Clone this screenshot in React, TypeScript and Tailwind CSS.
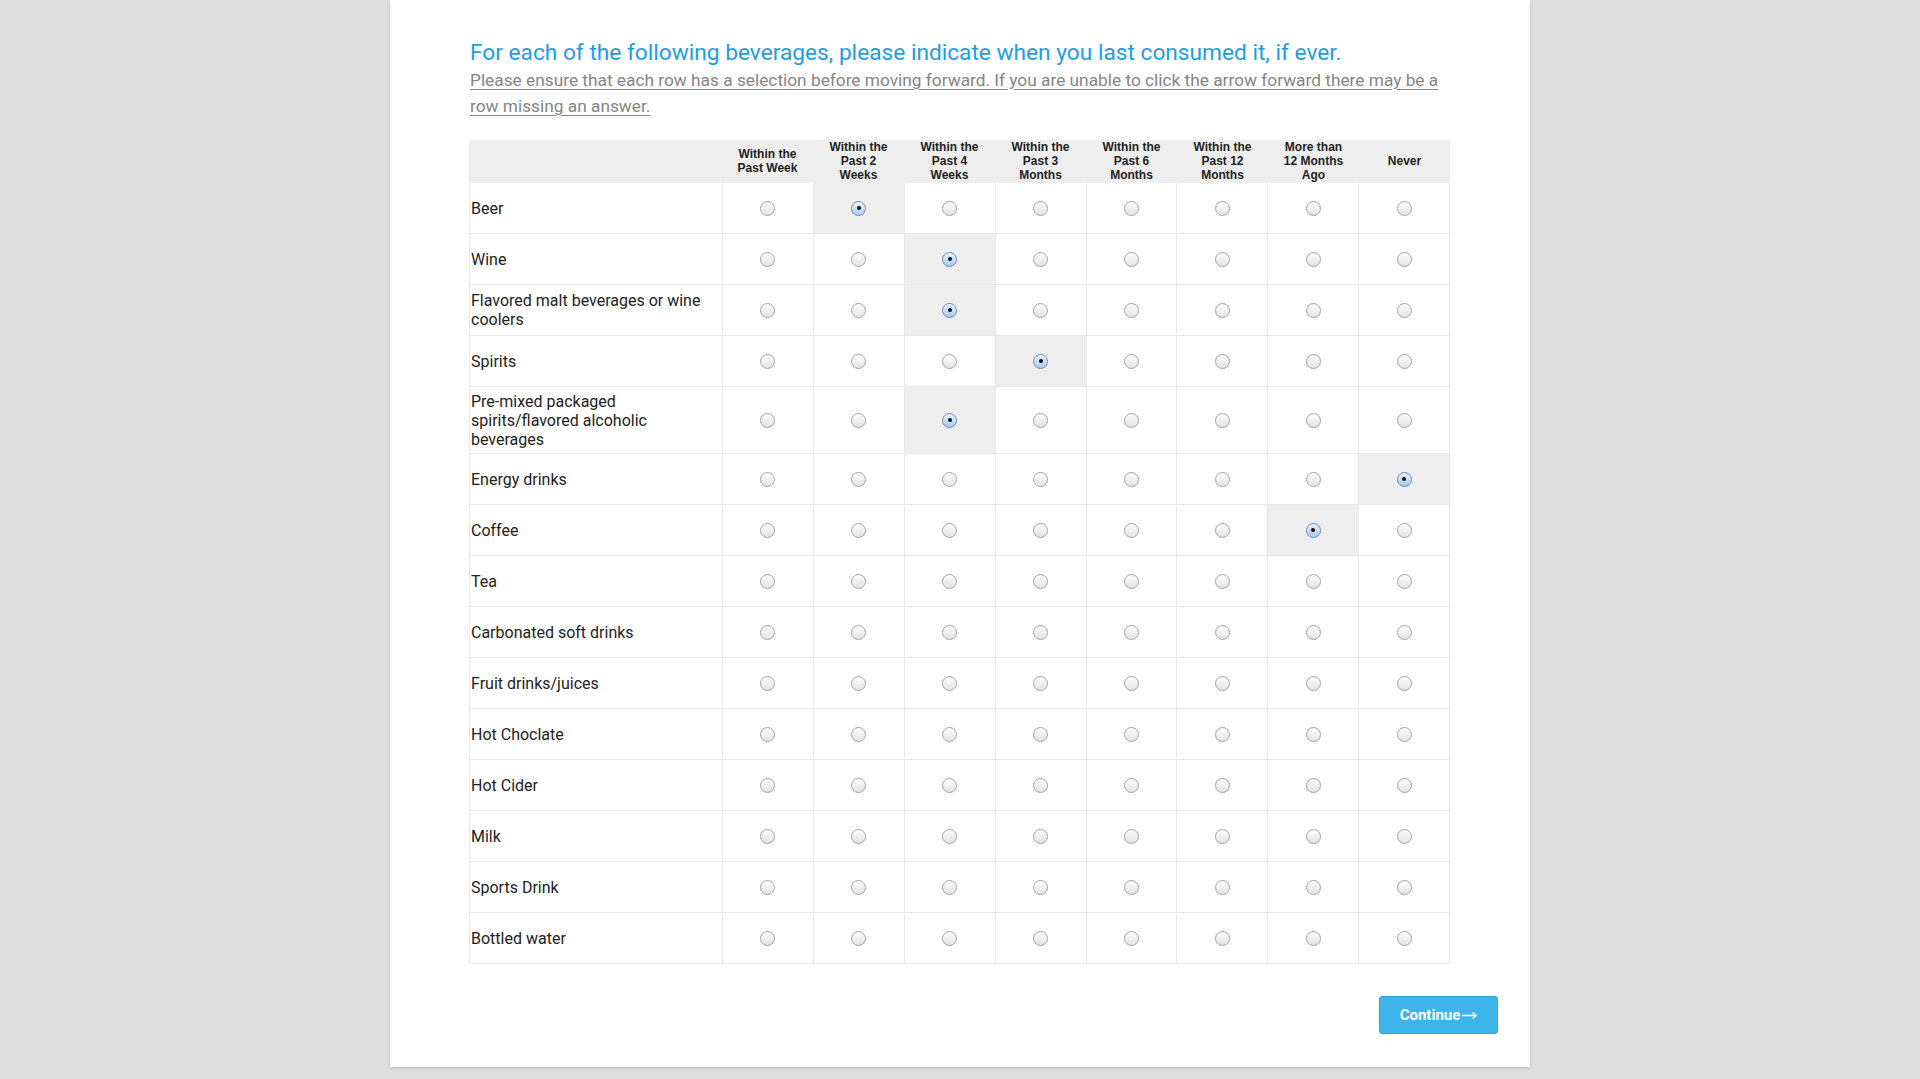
import React from "react";

const columns = [
  ["Within the", "Past Week"],
  ["Within the", "Past 2", "Weeks"],
  ["Within the", "Past 4", "Weeks"],
  ["Within the", "Past 3", "Months"],
  ["Within the", "Past 6", "Months"],
  ["Within the", "Past 12", "Months"],
  ["More than", "12 Months", "Ago"],
  ["Never"],
];

const rows: { label: string; sel: number; tall?: boolean }[] = [
  { label: "Beer", sel: 1 },
  { label: "Wine", sel: 2 },
  { label: "Flavored malt beverages or wine coolers", sel: 2 },
  { label: "Spirits", sel: 3 },
  { label: "Pre-mixed packaged spirits/flavored alcoholic beverages", sel: 2, tall: true },
  { label: "Energy drinks", sel: 7 },
  { label: "Coffee", sel: 6 },
  { label: "Tea", sel: -1 },
  { label: "Carbonated soft drinks", sel: -1 },
  { label: "Fruit drinks/juices", sel: -1 },
  { label: "Hot Choclate", sel: -1 },
  { label: "Hot Cider", sel: -1 },
  { label: "Milk", sel: -1 },
  { label: "Sports Drink", sel: -1 },
  { label: "Bottled water", sel: -1 },
];

function Radio({ checked }: { checked: boolean }) {
  if (checked) {
    return (
      <span className="flex h-[15px] w-[15px] items-center justify-center rounded-full border border-[#6a87b4] bg-gradient-to-b from-[#e4f0fd] to-[#a9cbf2] shadow-[inset_0_1px_1px_rgba(255,255,255,0.8)]">
        <span className="h-[4px] w-[4px] rounded-full bg-[#111]" />
      </span>
    );
  }
  return (
    <span className="block h-[15px] w-[15px] rounded-full border border-[#a3a3a3] bg-gradient-to-b from-[#fdfdfd] to-[#e3e3e3]" />
  );
}

export default function App() {
  return (
    <div className="min-h-[1079px] w-full bg-[#dddddd] font-['Roboto',sans-serif]">
      <div className="mx-auto w-[1140px] bg-white pb-[33px] pt-[39px] shadow-[0_1px_3px_rgba(0,0,0,0.15)]">
        <div className="pl-[80px] pr-[80px]">
          <h1 className="whitespace-nowrap text-[22.7px] leading-[28px] text-[#1d9ee2]">
            For each of the following beverages, please indicate when you last consumed it, if ever.
          </h1>
          <p className="w-[980px] text-[17.3px] leading-[26px] text-[#858585] underline underline-offset-[3px]">
            Please ensure that each row has a selection before moving forward. If you are unable to click the arrow forward there may be a row missing an answer.
          </p>
        </div>

        <div className="ml-[79px] mt-[21px] w-[981px]">
          <div className="grid h-[43px] grid-cols-[253px_repeat(8,minmax(0,1fr))] bg-[#eeeeee]">
            <div />
            {columns.map((c, i) => (
              <div
                key={i}
                className="flex items-start justify-center text-center font-['Liberation_Sans',Arial,sans-serif] text-[12px] font-bold leading-[14px] text-[#222]"
              >
                <div className={c.length === 1 ? "pt-[14px]" : c.length === 2 ? "pt-[7px]" : ""}>
                  {c.map((l, j) => (
                    <div key={j}>{l}</div>
                  ))}
                </div>
              </div>
            ))}
          </div>
          <div className="border-x border-[#e8e8e8]">
            {rows.map((r, ri) => (
              <div
                key={ri}
                className={`grid grid-cols-[252px_repeat(8,minmax(0,1fr))] border-b border-[#e8e8e8] ${r.tall ? "h-[67px]" : "h-[51px]"}`}
              >
                <div className="flex items-center pl-[1px] pr-[8px] text-[16px] leading-[19px] text-[#222]">
                  {r.label}
                </div>
                {columns.map((_, ci) => (
                  <div
                    key={ci}
                    className={`flex items-center justify-center border-l border-[#e8e8e8] ${r.sel === ci ? "bg-[#eeeeee]" : ""}`}
                  >
                    <Radio checked={r.sel === ci} />
                  </div>
                ))}
              </div>
            ))}
          </div>
        </div>

        <div className="mt-[32px] flex justify-end pr-[32px]">
          <button className="flex h-[38px] w-[119px] items-center justify-center gap-[2px] rounded-[3px] border border-[#2ea3d8] bg-[#3db5ea] text-[15px] font-bold text-white">
            <span>Continue</span>
            <svg width="15" height="9" viewBox="0 0 15 9" className="mt-[1px]">
              <path d="M0 4.5H13.5" stroke="white" strokeWidth="1.6" />
              <path d="M10.5 1.5L14 4.5L10.5 7.5" fill="none" stroke="white" strokeWidth="1.6" />
            </svg>
          </button>
        </div>
      </div>
    </div>
  );
}
